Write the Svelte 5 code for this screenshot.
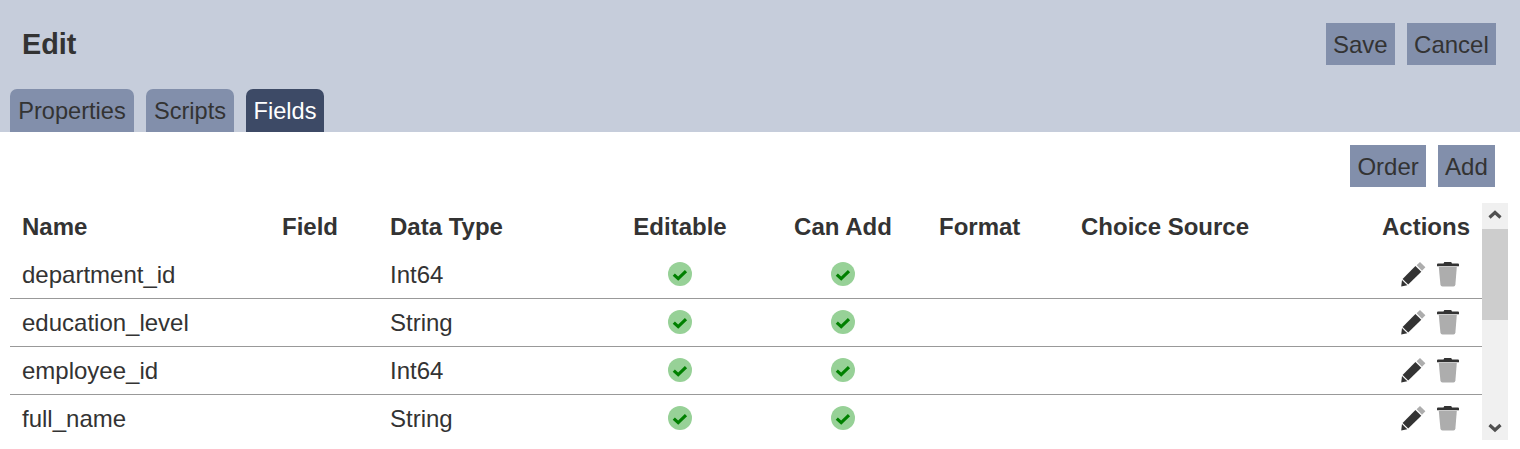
<script>
  const fields = [
    { name: 'department_id', type: 'Int64' },
    { name: 'education_level', type: 'String' },
    { name: 'employee_id', type: 'Int64' },
    { name: 'full_name', type: 'String' }
  ];
  const tabs = ['Properties', 'Scripts', 'Fields'];
  let active = 'Fields';
</script>

<div class="header">
  <div class="title-row">
    <h1>Edit</h1>
    <div class="buttons">
      <button>Save</button>
      <button>Cancel</button>
    </div>
  </div>
  <div class="tabs">
    {#each tabs as tab}
      <button class="tab" class:active={tab === active} on:click={() => (active = tab)}>{tab}</button>
    {/each}
  </div>
</div>

<div class="toolbar">
  <button>Order</button>
  <button>Add</button>
</div>

<div class="grid-wrap">
  <div class="grid-scroll">
    <table>
      <colgroup>
        <col style="width: 260px" />
        <col style="width: 108px" />
        <col style="width: 221px" />
        <col style="width: 162px" />
        <col style="width: 166px" />
        <col style="width: 142px" />
        <col style="width: 301px" />
        <col style="width: 112px" />
      </colgroup>
      <thead>
        <tr>
          <th>Name</th>
          <th>Field</th>
          <th>Data Type</th>
          <th class="center">Editable</th>
          <th class="center can-add">Can Add</th>
          <th>Format</th>
          <th>Choice Source</th>
          <th class="right">Actions</th>
        </tr>
      </thead>
      <tbody>
        {#each fields as f}
          <tr>
            <td>{f.name}</td>
            <td></td>
            <td>{f.type}</td>
            <td class="center">
              <svg class="check" viewBox="0 0 24 24" width="24" height="24">
                <circle cx="12" cy="12" r="12" fill="#97d197" />
                <path d="M5.8 12.6 L10.2 16.6 L18 9.2" fill="none" stroke="#008000" stroke-width="3.2" />
              </svg>
            </td>
            <td class="center can-add">
              <svg class="check" viewBox="0 0 24 24" width="24" height="24">
                <circle cx="12" cy="12" r="12" fill="#97d197" />
                <path d="M5.8 12.6 L10.2 16.6 L18 9.2" fill="none" stroke="#008000" stroke-width="3.2" />
              </svg>
            </td>
            <td></td>
            <td></td>
            <td class="right">
              <span class="actions">
                <svg viewBox="0 0 25 26" width="25" height="26">
                  <path d="M19 1 L24.4 6.3 L21 9.7 L15.6 4.3 Z" fill="#adadad" />
                  <path d="M14.4 5 L20.3 10.8 L7.2 23.4 L1.6 18 Z" fill="#333" />
                  <path d="M1 19 L6.3 24.2 L0.2 25.6 Z" fill="#333" />
                </svg>
                <svg viewBox="0 0 22 26" width="22" height="26">
                  <path d="M0 3.5 Q0 2.5 1 2.5 L6.5 2.5 L7.3 1 L14.2 1 L15 2.5 L21 2.5 Q22 2.5 22 3.5 L22 5.2 L0 5.2 Z" fill="#333" />
                  <path d="M1.8 6 L19.8 6 L18.4 23.5 Q18.2 25.5 16.5 25.5 L5.5 25.5 Q3.6 25.5 3.4 23.5 Z" fill="#adadad" />
                </svg>
              </span>
            </td>
          </tr>
        {/each}
      </tbody>
    </table>
  </div>
  <div class="scrollbar">
    <div class="arrow">
      <svg viewBox="0 0 26 26" width="26" height="26"><path d="M7.5 14.5 L13 9.5 L18.5 14.5" fill="none" stroke="#505050" stroke-width="3.2" /></svg>
    </div>
    <div class="track"><div class="thumb"></div></div>
    <div class="arrow">
      <svg viewBox="0 0 26 26" width="26" height="26"><path d="M7.5 11 L13 16 L18.5 11" fill="none" stroke="#505050" stroke-width="3.2" /></svg>
    </div>
  </div>
</div>

<style>
  :global(body) {
    margin: 0;
    background: #fff;
    font-family: "Liberation Sans", Arial, sans-serif;
    color: #333;
  }

  .header {
    background: #c6cddb;
    height: 132px;
    box-sizing: border-box;
    padding: 23px 24px 0 10px;
  }

  .title-row {
    display: flex;
    justify-content: space-between;
    align-items: center;
    height: 42px;
    padding-left: 12px;
  }

  h1 {
    margin: 0;
    font-size: 28.8px;
    font-weight: bold;
  }

  .buttons {
    display: flex;
    gap: 12px;
  }

  button {
    height: 42px;
    padding: 1px 7.2px 0;
    border: none;
    background: #828fab;
    color: #333;
    font: 24px "Liberation Sans", Arial, sans-serif;
  }

  .tabs {
    display: flex;
    gap: 12px;
    margin-top: 24px;
  }

  .tab {
    height: 43px;
    padding: 1px 0 0;
    border-radius: 7px 7px 0 0;
    font-size: 23.6px;
  }

  .tab:nth-child(1) {
    width: 124px;
  }

  .tab:nth-child(2) {
    width: 88px;
  }

  .tab:nth-child(3) {
    width: 78px;
  }

  .tab.active {
    background: #3d4a66;
    color: #fff;
  }

  .toolbar {
    display: flex;
    justify-content: flex-end;
    gap: 12px;
    padding: 13px 25px 0 0;
  }

  .grid-wrap {
    display: flex;
    margin: 16px 12px 0 10px;
    height: 237px;
  }

  .grid-scroll {
    width: 1472px;
    overflow: hidden;
  }

  table {
    width: 1472px;
    table-layout: fixed;
    border-collapse: separate;
    border-spacing: 0;
    font-size: 24px;
  }

  th {
    height: 48px;
    padding: 0 12px;
    text-align: left;
    font-weight: bold;
  }

  td {
    height: 48px;
    padding: 0 12px;
    box-sizing: border-box;
    border-bottom: 1px solid #999;
  }

  .center {
    text-align: center;
  }

  .can-add {
    padding-right: 14px;
  }

  .right {
    text-align: right;
  }

  .check {
    display: block;
    margin: 0 auto 2px;
  }

  .actions {
    display: inline-flex;
    gap: 11px;
    vertical-align: middle;
    padding: 0 11px 3px 0;
  }

  .scrollbar {
    width: 26px;
    display: flex;
    flex-direction: column;
    background: #f0f0f0;
  }

  .arrow {
    height: 26px;
  }

  .arrow svg {
    display: block;
  }

  .track {
    flex: 1;
  }

  .thumb {
    height: 91px;
    background: #cdcdcd;
  }
</style>
